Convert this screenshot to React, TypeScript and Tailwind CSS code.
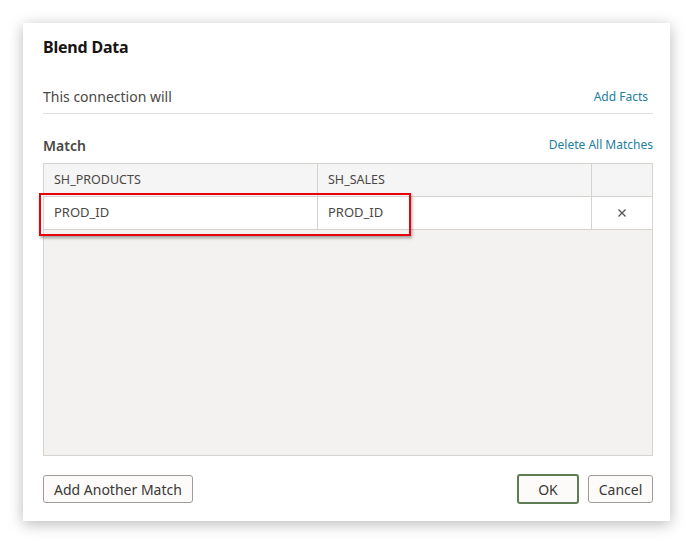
export default function App() {
  return (
    <div
      className="w-[700px] h-[553px] bg-white pt-[23px] pl-[23px]"
      style={{ fontFamily: '"Noto Sans", "Open Sans", sans-serif' }}
    >
      <div className="relative w-[647px] h-[498px] bg-white shadow-[0_3px_14px_rgba(0,0,0,0.28)] pl-[20px] pr-[17px] pt-[12px] flex flex-col">
        <h1 className="text-[16px] leading-[24px] font-bold text-[#161513] tracking-[-0.2px]">Blend Data</h1>

        {/* connection row */}
        <div className="mt-[28px] flex items-center justify-between pb-[6px] border-b border-[#dedcda]">
          <span className="text-[14px] leading-[20px] text-[#4a4745]">This connection will</span>
          <span className="text-[12px] leading-[20px] text-[#227e9e] mr-[5px]">Add Facts</span>
        </div>

        {/* match header */}
        <div className="mt-[22px] flex items-center justify-between">
          <span className="text-[14px] leading-[20px] font-semibold text-[#4a4745]">Match</span>
          <span className="text-[12px] leading-[18px] text-[#227e9e] -mt-[2px]">Delete All Matches</span>
        </div>

        {/* table */}
        <div className="mt-[7px] h-[293px] border border-[#d6d3cf] bg-[#f3f2f1] flex flex-col">
          <div className="grid grid-cols-[274px_274px_60px] h-[33px] bg-[#f5f5f5] border-b border-[#d6d3cf] text-[12.5px] text-[#4a4745]">
            <div className="pl-[10px] flex items-center border-r border-[#d6d3cf]">SH_PRODUCTS</div>
            <div className="pl-[10px] flex items-center border-r border-[#d6d3cf]">SH_SALES</div>
            <div />
          </div>
          <div className="grid grid-cols-[274px_274px_60px] h-[33px] bg-white border-b border-[#d6d3cf] text-[13px] text-[#4a4745]">
            <div className="pl-[10px] flex items-center border-r border-[#d6d3cf]">PROD_ID</div>
            <div className="pl-[10px] flex items-center border-r border-[#d6d3cf]">PROD_ID</div>
            <div className="flex items-center justify-center">
              <svg width="10" height="10" viewBox="0 0 10 10" className="text-[#555]">
                <path d="M1.5 1.5L8.5 8.5M8.5 1.5L1.5 8.5" stroke="currentColor" strokeWidth="1.3" />
              </svg>
            </div>
          </div>
        </div>

        {/* footer buttons */}
        <div className="mt-[18px] flex items-center justify-between">
          <button className="h-[28px] px-[10px] rounded-[3px] border border-[#a09b96] bg-[#fcfbfa] text-[14px] text-[#3a3734]">
            Add Another Match
          </button>
          <div className="flex gap-[9px]">
            <button className="h-[30px] w-[62px] rounded-[3px] border-2 border-[#5f7d55] bg-[#fcfbfa] text-[14px] text-[#3a3734]">
              OK
            </button>
            <button className="h-[28px] w-[65px] mt-[1px] rounded-[3px] border border-[#a09b96] bg-[#fcfbfa] text-[14px] text-[#3a3734]">
              Cancel
            </button>
          </div>
        </div>

        {/* highlight box */}
        <div className="absolute left-[16px] top-[170px] w-[372px] h-[43px] border-2 border-[#e8000b] shadow-[1px_2px_3px_rgba(0,0,0,0.35)]" />
      </div>
    </div>
  );
}
